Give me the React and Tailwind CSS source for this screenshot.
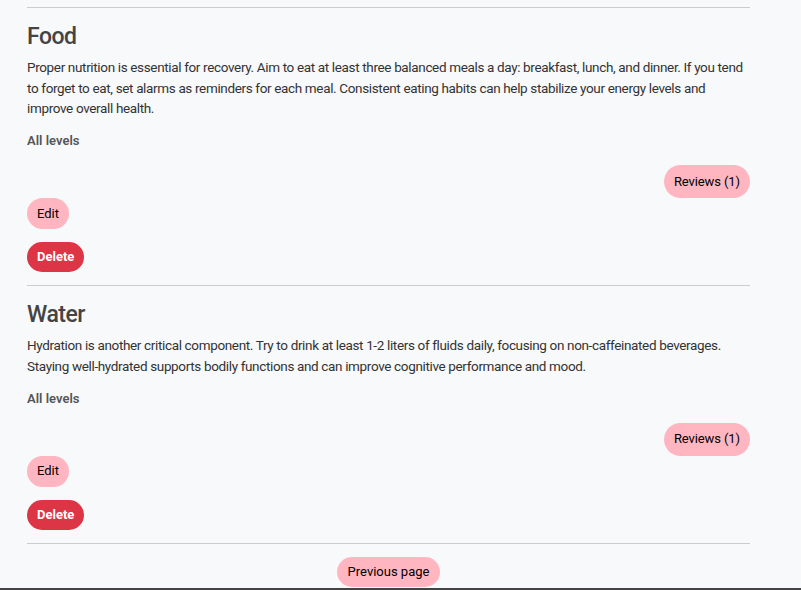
import React from 'react';

const tips = [
  {
    title: 'Food',
    body: 'Proper nutrition is essential for recovery. Aim to eat at least three balanced meals a day: breakfast, lunch, and dinner. If you tend to forget to eat, set alarms as reminders for each meal. Consistent eating habits can help stabilize your energy levels and improve overall health.',
    level: 'All levels',
    reviews: 1,
  },
  {
    title: 'Water',
    body: 'Hydration is another critical component. Try to drink at least 1-2 liters of fluids daily, focusing on non-caffeinated beverages. Staying well-hydrated supports bodily functions and can improve cognitive performance and mood.',
    level: 'All levels',
    reviews: 1,
  },
];

const TipCard = ({ tip }) => (
  <div className="border-t border-[#cccccc] pt-[14px] pb-[13px] flex flex-col">
    <h2 className="text-[23px] leading-[30px] font-medium tracking-[-0.5px] text-[#444444]">{tip.title}</h2>
    <p className="mt-[5px] text-[13.5px] leading-[20.7px] tracking-[-0.35px] text-[#333333]">{tip.body}</p>
    <p className="mt-[12px] text-[13px] leading-[20px] font-semibold text-[#555555]">{tip.level}</p>

    <button className="mt-[14px] self-end h-[33px] px-[10px] rounded-full bg-[#ffb6c1] text-[13px] tracking-[-0.1px] text-black">
      Reviews ({tip.reviews})
    </button>
    <button className="self-start h-[31px] px-[10px] rounded-full bg-[#ffb6c1] text-[13px] text-black">
      Edit
    </button>
    <button className="mt-[13px] self-start h-[30px] px-[10px] rounded-full bg-[#dc3545] text-[13px] font-bold text-white">
      Delete
    </button>
  </div>
);

export default function App() {
  return (
    <div
      className="h-screen overflow-hidden bg-[#f8f9fb] flex flex-col"
      style={{ fontFamily: 'Roboto, "Noto Sans", sans-serif' }}
    >
      <main className="pt-[7px] ml-[27px] w-[723px]">
        {tips.map((tip) => (
          <TipCard key={tip.title} tip={tip} />
        ))}

        {/* Pagination */}
        <div className="border-t border-[#cccccc] pt-[13px] pb-[1px] flex justify-center">
          <button className="h-[30px] px-[11px] rounded-full bg-[#ffb6c1] text-[13px] text-black">
            Previous page
          </button>
        </div>
      </main>

      <footer className="h-[40px] shrink-0 bg-[#444444]" />
    </div>
  );
}
